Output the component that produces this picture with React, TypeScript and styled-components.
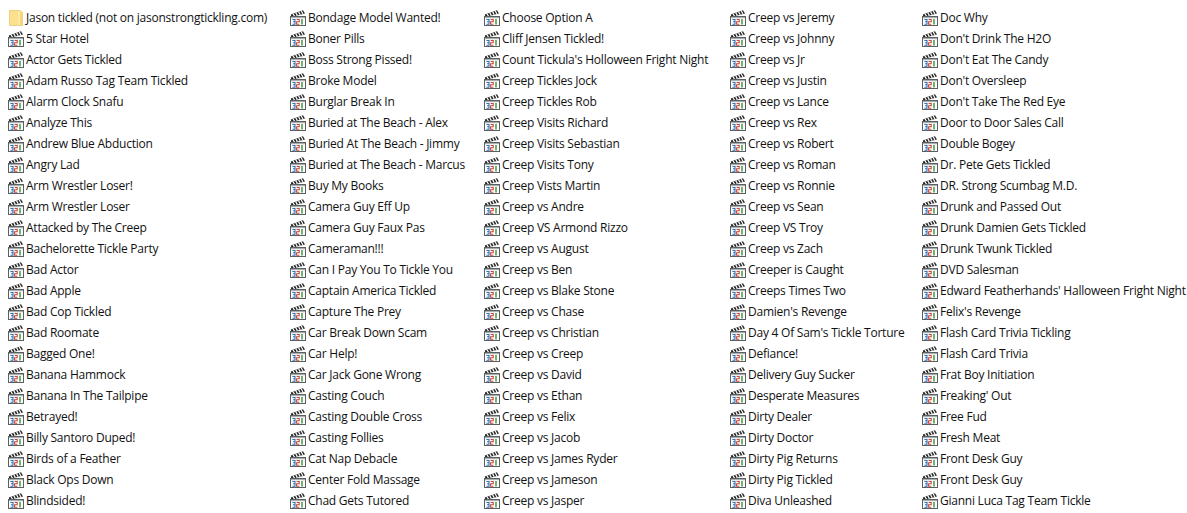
import React from "react";
import styled, { createGlobalStyle } from "styled-components";

const Global = createGlobalStyle`
  html, body { margin: 0; padding: 0; background: #ffffff; }
  body { overflow: hidden; }
`;

const columns: { width: number; items: string[] }[] = [
  { width: 282, items: ["Jason tickled (not on jasonstrongtickling.com)","5 Star Hotel","Actor Gets Tickled","Adam Russo Tag Team Tickled","Alarm Clock Snafu","Analyze This","Andrew Blue Abduction","Angry Lad","Arm Wrestler Loser!","Arm Wrestler Loser","Attacked by The Creep","Bachelorette Tickle Party","Bad Actor","Bad Apple","Bad Cop Tickled","Bad Roomate","Bagged One!","Banana Hammock","Banana In The Tailpipe","Betrayed!","Billy Santoro Duped!","Birds of a Feather","Black Ops Down","Blindsided!"] },
  { width: 194, items: ["Bondage Model Wanted!","Boner Pills","Boss Strong Pissed!","Broke Model","Burglar Break In","Buried at The Beach - Alex","Buried At The Beach - Jimmy","Buried at The Beach - Marcus","Buy My Books","Camera Guy Eff Up","Camera Guy Faux Pas","Cameraman!!!","Can I Pay You To Tickle You","Captain America Tickled","Capture The Prey","Car Break Down Scam","Car Help!","Car Jack Gone Wrong","Casting Couch","Casting Double Cross","Casting Follies","Cat Nap Debacle","Center Fold Massage","Chad Gets Tutored"] },
  { width: 246, items: ["Choose Option A","Cliff Jensen Tickled!","Count Tickula's Holloween Fright Night","Creep Tickles Jock","Creep Tickles Rob","Creep Visits Richard","Creep Visits Sebastian","Creep Visits Tony","Creep Vists Martin","Creep vs Andre","Creep VS Armond Rizzo","Creep vs August","Creep vs Ben","Creep vs Blake Stone","Creep vs Chase","Creep vs Christian","Creep vs Creep","Creep vs David","Creep vs Ethan","Creep vs Felix","Creep vs Jacob","Creep vs James Ryder","Creep vs Jameson","Creep vs Jasper"] },
  { width: 192, items: ["Creep vs Jeremy","Creep vs Johnny","Creep vs Jr","Creep vs Justin","Creep vs Lance","Creep vs Rex","Creep vs Robert","Creep vs Roman","Creep vs Ronnie","Creep vs Sean","Creep VS Troy","Creep vs Zach","Creeper is Caught","Creeps Times Two","Damien's Revenge","Day 4 Of Sam's Tickle Torture","Defiance!","Delivery Guy Sucker","Desperate Measures","Dirty Dealer","Dirty Doctor","Dirty Pig Returns","Dirty Pig Tickled","Diva Unleashed"] },
  { width: 265, items: ["Doc Why","Don't Drink The H2O","Don't Eat The Candy","Don't Oversleep","Don't Take The Red Eye","Door to Door Sales Call","Double Bogey","Dr. Pete Gets Tickled","DR. Strong Scumbag M.D.","Drunk and Passed Out","Drunk Damien Gets Tickled","Drunk Twunk Tickled","DVD Salesman","Edward Featherhands' Halloween Fright Night","Felix's Revenge","Flash Card Trivia Tickling","Flash Card Trivia","Frat Boy Initiation","Freaking' Out","Free Fud","Fresh Meat","Front Desk Guy","Front Desk Guy","Gianni Luca Tag Team Tickle"] },
];

const Page = styled.div`
  width: 1187px;
  height: 513px;
  overflow: hidden;
  background: #ffffff;
  display: flex;
  padding: 7px 0 0 8px;
  box-sizing: border-box;
`;
const Column = styled.ul<{ $width: number }>`
  list-style: none;
  margin: 0;
  padding: 0;
  flex: 0 0 ${(p) => p.$width}px;
  width: ${(p) => p.$width}px;
`;
const Row = styled.li`
  height: 21px;
  display: flex;
  align-items: center;
  gap: 2px;
  white-space: nowrap;
`;
const Label = styled.span`
  font-family: "Open Sans", "Noto Sans", "Liberation Sans", sans-serif;
  font-size: 12px;
  letter-spacing: -0.24px;
  color: #111111;
  line-height: 21px;
`;
const IconSvg = styled.svg`
  flex: 0 0 16px;
  width: 16px;
  height: 16px;
  display: block;
`;

const FolderIcon = () => (
  <IconSvg viewBox="0 0 16 16" aria-hidden="true">
    <path d="M1.5 0.5H12L14.5 2.5V15.5H1.5Z" fill="#fbe08e" stroke="#ecd084" strokeWidth="1" />
    <path d="M11 1V15" stroke="#f9f0c8" strokeWidth="1" />
    <path d="M12 2H14V15H12Z" fill="#f8d774" />
  </IconSvg>
);

const MediaIcon = () => (
  <IconSvg viewBox="0 0 16 16" aria-hidden="true">
    <path d="M0.8 4.6L13 0.2L15 3.6L1.4 7Z" fill="#262626" />
    <path d="M3 3.8L4.6 6.4M5.8 2.8L7.4 5.6M8.6 1.9L10.2 4.8M11.3 1L12.9 4" stroke="#ffffff" strokeWidth="1.2" />
    <rect x="0.5" y="6.5" width="15" height="9" fill="#ffffff" stroke="#5a6062" strokeWidth="1" />
    <rect x="1" y="7" width="14" height="1.2" fill="#a5adaf" />
    <path d="M2.4 9.5H5V14.3H2.4M3 11.8H5" fill="none" stroke="#2f6fb8" strokeWidth="1.1" />
    <path d="M6.6 9.5H9.2V11.8H6.6V14.3H9.4" fill="none" stroke="#c8443a" strokeWidth="1.1" />
    <path d="M12 9V14.5" stroke="#3f9a44" strokeWidth="1.5" />
  </IconSvg>
);

export default function App() {
  return (
    <>
      <Global />
      <Page>
        {columns.map((col) => (
          <Column key={col.items[0]} $width={col.width}>
            {col.items.map((name, i) => (
              <Row key={name + i}>
                {name.startsWith("Jason") ? <FolderIcon /> : <MediaIcon />}
                <Label>{name}</Label>
              </Row>
            ))}
          </Column>
        ))}
      </Page>
    </>
  );
}
